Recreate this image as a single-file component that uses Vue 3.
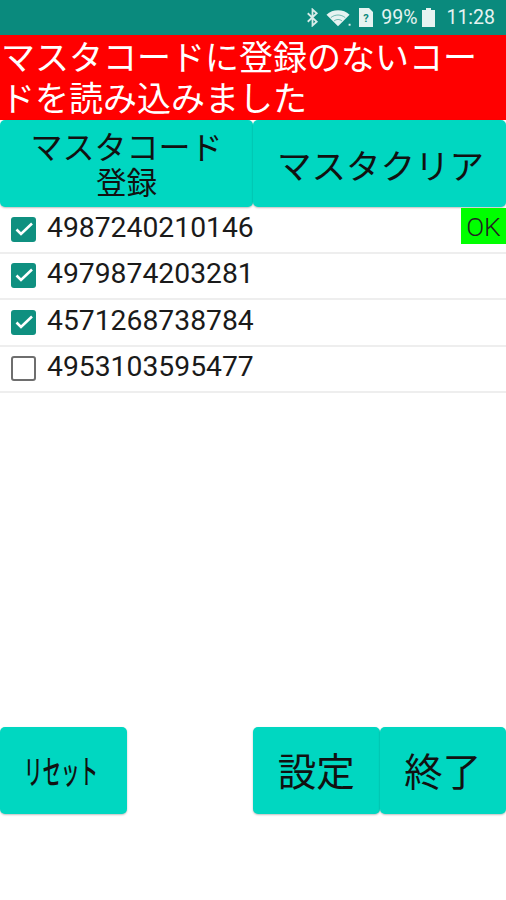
<template>
  <div class="screen">
    <div class="status-bar">
      <svg class="ic-bt" width="13" height="19" viewBox="0 0 12 18"><path d="M1.5 5l8.5 8-4 3.6V1.4L10 5l-8.5 8" fill="none" stroke="#d8ece9" stroke-width="1.7"/></svg>
      <svg class="ic-wifi" width="26" height="18" viewBox="0 0 27 18">
        <path d="M0.5 5.5C7 -0.5 18 -0.5 24.5 5.5L12.5 17.5z" fill="#e6f3f1"/>
        <path d="M5 8.6C9.5 5 15.5 5 20 8.6M8.4 12C11 10 14 10 16.6 12" fill="none" stroke="#0a8a7d" stroke-width="0.8" opacity="0.7"/>
        <path d="M23.5 15h2v2h-2z" fill="#e6f3f1"/>
      </svg>
      <svg class="ic-sim" width="15" height="19" viewBox="0 0 15 19"><path d="M0 0h10l4 4v15H0z" fill="#e6f3f1"/><text x="7" y="14" text-anchor="middle" class="sim-q">?</text></svg>
      <span class="pct">99%</span>
      <svg class="ic-bat" width="13" height="19" viewBox="0 0 13 19"><path d="M4 0h5v2h4v17H0V2h4z" fill="#e6f3f1"/></svg>
      <span class="time">11:28</span>
    </div>

    <div class="message">マスタコードに登録のないコードを読み込みました</div>

    <div class="top-buttons">
      <button class="btn wide reg">マスタコード<br><span class="reg-sub">登録</span></button>
      <button class="btn wide clear">マスタクリア</button>
    </div>

    <div class="list">
      <div v-for="item in items" :key="item.code" class="row">
        <span class="check" :class="{ on: item.checked }">
          <svg v-if="item.checked" width="25" height="25" viewBox="0 0 25 25"><path d="M5.5 12.5l4.5 4.5L21 6.5" fill="none" stroke="#fff" stroke-width="2.6"/></svg>
        </span>
        <span class="code">{{ item.code }}</span>
        <span v-if="item.ok" class="ok">OK</span>
      </div>
    </div>

    <div class="bottom-buttons">
      <button class="btn small"><span class="narrow">リセット</span></button>
      <div class="right-group">
        <button class="btn small big-text">設定</button>
        <button class="btn small big-text">終了</button>
      </div>
    </div>
  </div>
</template>

<script setup>
const items = [
  { code: '4987240210146', checked: true, ok: true },
  { code: '4979874203281', checked: true, ok: false },
  { code: '4571268738784', checked: true, ok: false },
  { code: '4953103595477', checked: false, ok: false }
]
</script>

<style>
html, body {
  margin: 0;
  background: #fff;
}
</style>

<style scoped>
.screen {
  width: 506px;
  height: 900px;
  display: flex;
  flex-direction: column;
  background: #fff;
  overflow: hidden;
  font-family: "Noto Sans CJK JP", "Noto Sans", sans-serif;
}

.status-bar {
  height: 35px;
  background: #0a8a7d;
  display: flex;
  align-items: center;
  justify-content: flex-end;
  padding-right: 11px;
  color: #e6f3f1;
  font-family: Roboto, sans-serif;
  font-size: 19.5px;
}

.ic-bt { margin-right: 7px; }
.ic-wifi { margin-right: 7px; }
.ic-sim { margin-right: 7px; }
.ic-bat { margin-left: 5px; margin-right: 11px; }

.sim-q {
  font-size: 11px;
  font-weight: 700;
  fill: #0a8a7d;
}

.message {
  height: 85px;
  background: #ff0000;
  color: #fff;
  font-size: 34px;
  line-height: 41px;
  padding-left: 1px;
  word-break: break-all;
  box-sizing: border-box;
}

.top-buttons {
  display: flex;
  height: 87px;
}

.btn {
  border: 0;
  padding: 0;
  margin: 0;
  background: #00d7c1;
  color: #111;
  border-radius: 5px;
  font-family: inherit;
  box-shadow: 0 1px 2px rgba(0, 0, 0, 0.25);
}

.wide {
  width: 253px;
  height: 87px;
}

.reg {
  font-size: 32px;
  line-height: 35px;
}

.reg-sub { font-size: 30.5px; }

.clear {
  font-size: 34.5px;
  padding-left: 2px;
}

.list {
  display: flex;
  flex-direction: column;
}

.row {
  height: 46.5px;
  display: flex;
  align-items: center;
  box-sizing: border-box;
  border-bottom: 2px solid #eeeeee;
  position: relative;
}

.check {
  width: 25px;
  height: 25px;
  margin-left: 11px;
  margin-right: 11px;
  box-sizing: border-box;
  border: 2px solid #6e6e6e;
  border-radius: 3px;
  display: block;
  flex: none;
}

.check.on {
  background: #0f9080;
  border: 0;
}

.check svg { display: block; }

.code {
  font-family: Roboto, sans-serif;
  font-size: 28.3px;
  color: #1a1a1a;
  line-height: 1;
  margin-bottom: 3px;
}

.ok {
  position: absolute;
  right: 0;
  top: 1px;
  width: 45px;
  height: 36px;
  background: #00ff00;
  color: #222;
  font-family: Roboto, sans-serif;
  font-size: 26.5px;
  font-weight: 300;
  line-height: 38px;
  text-align: center;
}

.bottom-buttons {
  margin-top: 334px;
  display: flex;
  justify-content: space-between;
}

.right-group { display: flex; }

.small {
  width: 126.5px;
  height: 87px;
}

.big-text {
  font-size: 38.5px;
  padding-bottom: 3px;
}

.narrow {
  display: inline-block;
  font-size: 33px;
  font-weight: 500;
  transform: scaleX(0.56);
  white-space: nowrap;
  margin: 0 -28px 2px -32px;
}
</style>
